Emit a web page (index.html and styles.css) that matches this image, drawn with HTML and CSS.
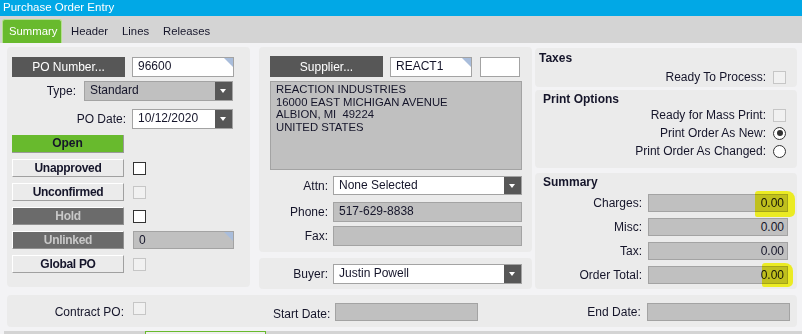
FILE: index.html
```html
<!DOCTYPE html>
<html lang="en">
<head>
  <meta charset="UTF-8">
  <title>Purchase Order Entry</title>
  <link rel="stylesheet" href="styles.css">
</head>
<body>

  <div class="titlebar">Purchase Order Entry</div>
  <div class="tabbar">
    <span class="tab active">Summary</span>
    <span class="tab">Header</span>
    <span class="tab">Lines</span>
    <span class="tab">Releases</span>
  </div>

  <div class="content">
    <div class="top">

      <!-- left: order status -->
      <div class="panel left">
        <div class="row">
          <button class="btn dark w113">PO Number...</button>
          <div class="field white w102 keyed">96600</div>
        </div>
        <div class="row r-type">
          <span class="label lw64">Type:</span>
          <div class="select gray w149"><span>Standard</span><i class="arrow"></i></div>
        </div>
        <div class="row r-date">
          <span class="label lw114">PO Date:</span>
          <div class="select white w101"><span>10/12/2020</span><i class="arrow"></i></div>
        </div>
        <div class="status open">Open</div>
        <div class="row r-flag">
          <button class="flag">Unapproved</button>
          <span class="check"></span>
        </div>
        <div class="row r-flag">
          <button class="flag">Unconfirmed</button>
          <span class="check off"></span>
        </div>
        <div class="row r-flag">
          <button class="flag dim">Hold</button>
          <span class="check"></span>
        </div>
        <div class="row r-flag">
          <button class="flag dim">Unlinked</button>
          <div class="field gray w101 h18 keyed">0</div>
        </div>
        <div class="row r-flag">
          <button class="flag">Global PO</button>
          <span class="check off"></span>
        </div>
      </div>

      <!-- middle: supplier -->
      <div class="col mid">
        <div class="panel supplier">
          <div class="row">
            <button class="btn dark w113 h21">Supplier...</button>
            <div class="field white w82 keyed">REACT1</div>
            <div class="field white w40"></div>
          </div>
          <div class="address">REACTION INDUSTRIES<br>16000 EAST MICHIGAN AVENUE<br>ALBION, MI&nbsp; 49224<br>UNITED STATES</div>
          <div class="row r-attn">
            <span class="label lw58">Attn:</span>
            <div class="select white w189 h19"><span>None Selected</span><i class="arrow"></i></div>
          </div>
          <div class="row r-phone">
            <span class="label lw58">Phone:</span>
            <div class="field gray w189">517-629-8838</div>
          </div>
          <div class="row r-fax">
            <span class="label lw58">Fax:</span>
            <div class="field gray w189"></div>
          </div>
        </div>
        <div class="panel buyer">
          <div class="row">
            <span class="label lw58">Buyer:</span>
            <div class="select white w189"><span>Justin Powell</span><i class="arrow"></i></div>
          </div>
        </div>
      </div>

      <!-- right: options and totals -->
      <div class="col right">
        <div class="panel taxes">
          <div class="heading">Taxes</div>
          <div class="opt"><span>Ready To Process:</span><span class="check off"></span></div>
        </div>
        <div class="panel print">
          <div class="heading">Print Options</div>
          <div class="opt"><span>Ready for Mass Print:</span><span class="check off"></span></div>
          <div class="opt"><span>Print Order As New:</span><span class="radio on"></span></div>
          <div class="opt"><span>Print Order As Changed:</span><span class="radio"></span></div>
        </div>
        <div class="panel summary">
          <div class="heading">Summary</div>
          <div class="amount-row">
            <span>Charges:</span>
            <div class="field gray amount h18">0.00<i class="marker m1"></i></div>
          </div>
          <div class="amount-row">
            <span>Misc:</span>
            <div class="field gray amount h18">0.00</div>
          </div>
          <div class="amount-row">
            <span>Tax:</span>
            <div class="field gray amount h18">0.00</div>
          </div>
          <div class="amount-row">
            <span>Order Total:</span>
            <div class="field gray amount h18">0.00<i class="marker m2"></i></div>
          </div>
        </div>
      </div>
    </div>

    <div class="panel contract">
      <span class="label lw117">Contract PO:</span>
      <span class="check off"></span>
      <span class="label c-start">Start Date:</span>
      <div class="field gray w143 h18"></div>
      <span class="label c-end">End Date:</span>
      <div class="field gray w143 h18"></div>
    </div>
  </div>

  <div class="footer"><span class="footer-tab"></span></div>

</body>
</html>
```

FILE: styles.css
```css
:root {
  --blue: #01a8e6;
  --green: #68ba2d;
  --page: #f3f3f5;
  --panel: #ebebeb;
  --tabbar: #d4d4d4;
  --dark: #575757;
  --dim: #6b6b6b;
  --field: #c0c0c0;
  --edge: #a3a3a3;
  --text: #15152a;
  --key: #a9bddb;
}

html, body {
  margin: 0;
  padding: 0;
  background: var(--page);
  color: var(--text);
  font-family: "Liberation Sans", Arial, sans-serif;
  font-size: 12px;
  overflow: hidden;
}

button {
  font-family: inherit;
  font-size: 12px;
  margin: 0;
  padding: 0;
  cursor: pointer;
}

.titlebar {
  height: 16px;
  line-height: 15px;
  padding-left: 3px;
  background: var(--blue);
  color: #fff;
  font-size: 11.5px;
}

.tabbar {
  height: 27px;
  background: var(--tabbar);
  display: flex;
  align-items: flex-end;
  padding-left: 2px;
  font-size: 11.3px;
}

.tab {
  height: 24px;
  line-height: 24px;
  padding: 0 7px;
}

.tab.active {
  width: 60px;
  box-sizing: border-box;
  background: var(--green);
  color: #fff;
  border: 1px solid #b4e08e;
  border-bottom: none;
  border-radius: 3px 3px 0 0;
  line-height: 22px;
  padding: 0 6px;
  margin-right: 2px;
}

.content {
  padding: 4px 5px 0 7px;
}

.top {
  display: flex;
  align-items: flex-start;
}

.col {
  display: flex;
  flex-direction: column;
}

.panel {
  background: var(--panel);
  border-radius: 4px;
  box-sizing: border-box;
}

/* left panel */

.left {
  width: 243px;
  height: 240px;
  padding: 10px 0 0 5px;
}

.row {
  display: flex;
  align-items: center;
}

.r-type { margin-top: 4px; }
.r-date { margin-top: 8px; }
.r-flag { margin-top: 6px; height: 18px; }

.label {
  text-align: right;
  box-sizing: border-box;
  flex-shrink: 0;
}

.lw64 { width: 64px; margin-right: 8px; }
.lw114 { width: 114px; margin-right: 6px; }
.lw58 { width: 58px; margin-right: 5px; }
.lw117 { width: 117px; margin-right: 9px; }

.btn {
  height: 20px;
  border: none;
}

.btn.dark {
  background: var(--dark);
  color: #fff;
}

.w113 { width: 113px; margin-right: 7px; }
.w102 { width: 102px; }
.w101 { width: 101px; }
.w149 { width: 149px; }
.w82 { width: 82px; margin-right: 8px; }
.w40 { width: 40px; }
.w189 { width: 189px; }
.w143 { width: 143px; }
.h21 { height: 21px; }
.h19 { height: 19px !important; }
.h18 { height: 18px !important; }

.field {
  position: relative;
  height: 20px;
  box-sizing: border-box;
  border: 1px solid var(--edge);
  padding: 0 5px;
  line-height: 17px;
  white-space: nowrap;
}

.field.white { background: #fff; }
.field.gray { background: var(--field); }

.keyed::after {
  content: "";
  position: absolute;
  top: 0;
  right: 0;
  border-top: 9px solid var(--key);
  border-left: 9px solid transparent;
}

.select {
  height: 20px;
  box-sizing: border-box;
  border: 1px solid var(--edge);
  display: flex;
  align-items: stretch;
}

.select.white { background: #fff; }
.select.gray { background: var(--field); }

.select span {
  flex: 1;
  padding-left: 5px;
  line-height: 17px;
}

.arrow {
  width: 17px;
  background: var(--dark);
  position: relative;
}

.arrow::after {
  content: "";
  position: absolute;
  left: 5px;
  top: 7px;
  border-top: 4px solid #fff;
  border-left: 3.5px solid transparent;
  border-right: 3.5px solid transparent;
}

.status {
  margin-top: 6px;
  width: 112px;
  height: 18px;
  box-sizing: border-box;
  text-align: center;
  font-weight: bold;
  line-height: 17px;
}

.status.open {
  background: var(--green);
  border-right: 1px solid #9a9a9a;
  border-bottom: 1px solid #9a9a9a;
}

.flag {
  width: 112px;
  height: 18px;
  margin-right: 9px;
  box-sizing: border-box;
  font-weight: bold;
  color: var(--text);
  background: var(--panel);
  border: none;
  border-top: 1px solid #fff;
  border-left: 1px solid #fff;
  border-right: 1px solid #a0a0a0;
  border-bottom: 1px solid #a0a0a0;
  letter-spacing: -0.3px;
}

.flag.dim {
  background: var(--dim);
  color: #c9c9c9;
  border-right-color: #909090;
  border-bottom-color: #909090;
}

.check {
  width: 13px;
  height: 13px;
  box-sizing: border-box;
  border: 1px solid #333;
  background: #fff;
  flex-shrink: 0;
}

.check.off {
  border-color: #c6c6c6;
  background: #f1f1f1;
}

.radio {
  width: 13px;
  height: 13px;
  box-sizing: border-box;
  border: 1px solid #333;
  border-radius: 50%;
  background: #fff;
  flex-shrink: 0;
  position: relative;
}

.radio.on::after {
  content: "";
  position: absolute;
  left: 2.5px;
  top: 2.5px;
  width: 6px;
  height: 6px;
  border-radius: 50%;
  background: #333;
}

/* middle column */

.mid {
  width: 273px;
  margin-left: 9px;
}

.supplier {
  height: 205px;
  padding: 9px 0 0 11px;
}

.address {
  margin-top: 4px;
  width: 252px;
  height: 89px;
  box-sizing: border-box;
  background: var(--field);
  border: 1px solid var(--edge);
  padding: 1px 5px;
  font-size: 11.3px;
  line-height: 12.5px;
}

.r-attn { margin-top: 6px; }
.r-phone { margin-top: 7px; }
.r-fax { margin-top: 4px; }

.buyer {
  margin-top: 6px;
  height: 31px;
  padding: 6px 0 0 11px;
}

/* right column */

.right {
  width: 262px;
  margin-left: 3px;
}

.heading {
  font-weight: bold;
  line-height: 14px;
}

.taxes {
  height: 39px;
  margin-top: 1px;
  padding: 3px 11px 0 4px;
}

.print {
  margin-top: 3px;
  height: 78px;
  padding: 2px 11px 0 8px;
}

.opt {
  display: flex;
  justify-content: flex-end;
  align-items: center;
  gap: 7px;
  height: 18px;
}

.taxes .opt { margin-top: 3px; }
.print .opt:first-of-type { margin-top: 5px; }

.summary {
  margin-top: 5px;
  height: 116px;
  padding: 2px 9px 0 8px;
}

.amount-row {
  display: flex;
  justify-content: flex-end;
  align-items: center;
  gap: 6px;
  margin-top: 5px;
}

.amount-row:first-of-type { margin-top: 4px; }
.amount-row + .amount-row { margin-top: 6px; }

.amount {
  width: 140px;
  text-align: right;
  line-height: 16px;
  padding-right: 3px;
}

.marker {
  position: absolute;
  top: -4px;
  background: rgba(255, 255, 0, 0.85);
  mix-blend-mode: multiply;
  border-radius: 3px 8px 5px 2px;
}

.m1 { left: 106px; width: 40px; height: 26px; }
.m2 { left: 113px; width: 31px; height: 24px; }

/* contract strip */

.contract {
  margin-top: 6px;
  height: 32px;
  display: flex;
  align-items: center;
  padding-top: 2px;
}

.contract .check { margin-top: -7px; }

.c-start {
  margin-left: 127px;
  margin-right: 5px;
  padding-top: 4px;
}

.c-end {
  margin-left: 109px;
  margin-right: 6px;
}

.footer {
  position: absolute;
  left: 4px;
  right: 0;
  top: 331px;
  height: 3px;
  background: var(--tabbar);
}

.footer-tab {
  position: absolute;
  left: 141px;
  top: 0;
  width: 121px;
  height: 3px;
  box-sizing: border-box;
  border: 1px solid var(--green);
  border-bottom: none;
  background: #eee;
}
```
